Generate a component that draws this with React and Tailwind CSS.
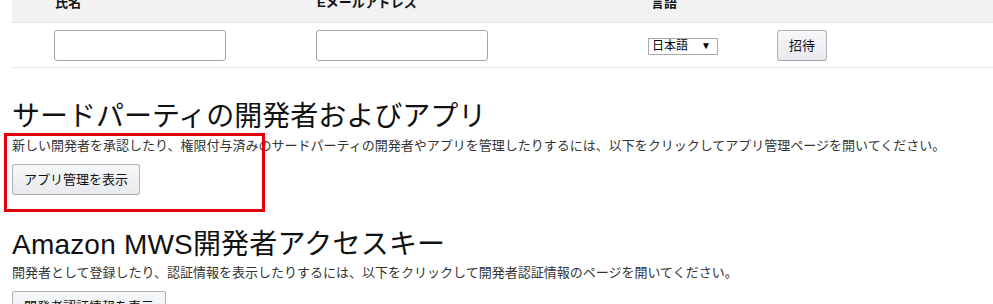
import React from "react";

const font = "font-['Liberation_Sans','Noto_Sans_CJK_JP',sans-serif]";

// Amazon-style grey button
const Button = ({ children }) => (
  <button
    type="button"
    className="h-[31px] rounded-[3px] border border-[#adb1b8] border-b-[#a2a6ac] bg-gradient-to-b from-[#f7f8fa] to-[#e7e9ec] px-[11px] text-[13px] leading-none text-[#111]"
  >
    {children}
  </button>
);

const TextInput = () => (
  <input
    type="text"
    className="h-[31px] w-[172px] rounded-[3px] border border-[#a6a6a6] bg-white px-2 text-[13px] outline-none"
  />
);

export default function App() {
  return (
    <div className={`relative h-[304px] w-full overflow-hidden bg-white text-[#111] ${font}`}>
      {/* invite table, scrolled so the header is partly hidden */}
      <div className="-mt-2 ml-3">
        <div className="flex h-[31px] items-start border-b border-[#e3e3e3] bg-[#f2f2f2] pt-[3px] text-[13px] font-bold leading-4">
          <div className="w-[43px]" />
          <div className="w-[262px]">氏名</div>
          <div className="w-[334px]">Eメールアドレス</div>
          <div className="w-[129px]">言語</div>
        </div>
        <div className="flex h-[45px] items-center border-b border-[#e7e7e7]">
          <div className="w-[42px]" />
          <div className="w-[262px]">
            <TextInput />
          </div>
          <div className="w-[332px]">
            <TextInput />
          </div>
          <div className="w-[129px] pt-[2px]">
            <div className="flex h-[17px] w-[70px] items-center justify-between border border-[#a9a9a9] bg-white pl-[3px] pr-[6px] text-[12px] leading-none text-black">
              <span>日本語</span>
              <span className="text-[10px]">▼</span>
            </div>
          </div>
          <Button>招待</Button>
        </div>
      </div>

      {/* third party developers */}
      <div className="px-3">
        <h2 className="mt-[32px] text-[28px] font-normal leading-[34px] text-[#111]">
          サードパーティの開発者およびアプリ
        </h2>
        <p className="mt-[3px] text-[13px] leading-[18px] text-[#333]">
          新しい開発者を承認したり、権限付与済みのサードパーティの開発者やアプリを管理したりするには、以下をクリックしてアプリ管理ページを開いてください。
        </p>
        <div className="mt-[9px]">
          <Button>アプリ管理を表示</Button>
        </div>

        <h2 className="mt-[33px] text-[28px] font-normal leading-[34px] tracking-[0.2px] text-[#111]">
          Amazon MWS開発者アクセスキー
        </h2>
        <p className="mt-[2px] text-[13px] leading-[18px] text-[#333]">
          開発者として登録したり、認証情報を表示したりするには、以下をクリックして開発者認証情報のページを開いてください。
        </p>
        <div className="mt-[9px]">
          <Button>開発者認証情報を表示</Button>
        </div>
      </div>

      {/* annotation highlight */}
      <div className="pointer-events-none absolute left-[4px] top-[133px] h-[79px] w-[261px] border-[3px] border-[#e3000b]" />
    </div>
  );
}
